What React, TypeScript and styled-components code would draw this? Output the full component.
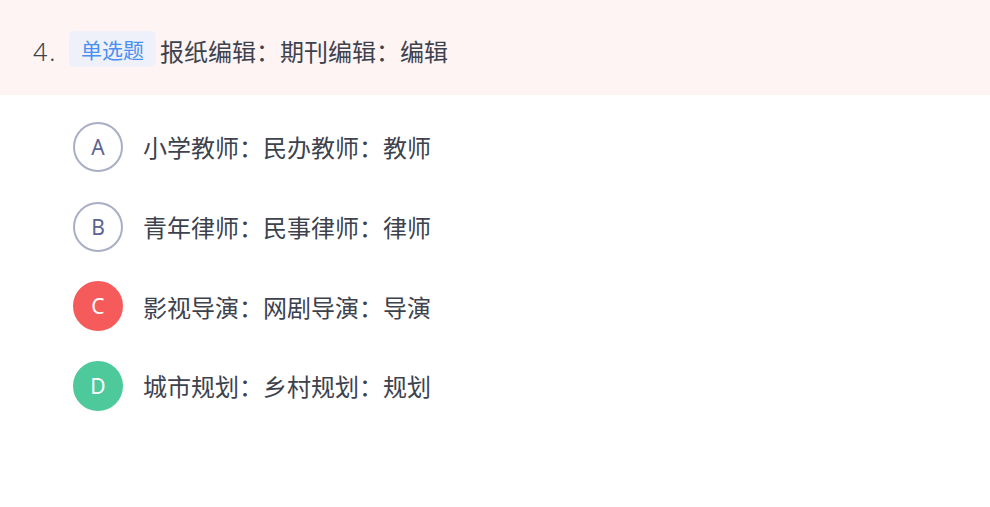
import styled, { createGlobalStyle } from 'styled-components'

const GlobalStyle = createGlobalStyle`
  body {
    margin: 0;
    background: #ffffff;
    font-family: 'Noto Sans CJK SC', 'Noto Sans', sans-serif;
  }
`

type Option = {
  key: string
  text: string
  state: 'idle' | 'wrong' | 'right'
}

const options: Option[] = [
  { key: 'A', text: '小学教师：民办教师：教师', state: 'idle' },
  { key: 'B', text: '青年律师：民事律师：律师', state: 'idle' },
  { key: 'C', text: '影视导演：网剧导演：导演', state: 'wrong' },
  { key: 'D', text: '城市规划：乡村规划：规划', state: 'right' },
]

const App = () => {
  return (
    <>
      <GlobalStyle />
      <Question>
        <Number>4.</Number>
        <Tag>单选题</Tag>
        <Title>报纸编辑：期刊编辑：编辑</Title>
      </Question>
      <OptionList>
        {options.map((o) => (
          <OptionRow key={o.key}>
            <Badge state={o.state}>{o.key}</Badge>
            <OptionText>{o.text}</OptionText>
          </OptionRow>
        ))}
      </OptionList>
    </>
  )
}

const Question = styled.div`
  box-sizing: border-box;
  display: flex;
  align-items: center;
  height: 95px;
  padding: 6px 0 0 33px;
  background-color: #fef4f4;
`

const Number = styled.span`
  font-family: 'Noto Sans', sans-serif;
  font-size: 25px;
  font-weight: 300;
  color: #3d424d;
  letter-spacing: 2px;
  width: 36px;
`

const Tag = styled.span`
  display: inline-flex;
  align-items: center;
  justify-content: center;
  width: 87px;
  height: 36px;
  margin-top: -3px;
  border-radius: 5px;
  background-color: #eef1f9;
  color: #4b8ff3;
  font-size: 21px;
  margin-right: 4px;
`

const Title = styled.span`
  font-size: 24px;
  color: #3d424d;
`

const OptionList = styled.div`
  display: flex;
  flex-direction: column;
  gap: 30px;
  padding: 27px 0 0 73px;
`

const OptionRow = styled.div`
  display: flex;
  align-items: center;
  height: 49.7px;
`

const badgeColors = {
  idle: { bg: '#ffffff', border: '#a9aec4', color: '#5b6390' },
  wrong: { bg: '#f65b5b', border: '#f65b5b', color: '#ffffff' },
  right: { bg: '#4ec99b', border: '#4ec99b', color: '#ffffff' },
}

const Badge = styled.div<{ state: Option['state'] }>`
  box-sizing: border-box;
  width: 50px;
  height: 50px;
  border-radius: 50%;
  display: flex;
  align-items: center;
  justify-content: center;
  font-family: 'Noto Sans', sans-serif;
  font-size: 21px;
  background-color: ${({ state }) => badgeColors[state].bg};
  border: 2px solid ${({ state }) => badgeColors[state].border};
  color: ${({ state }) => badgeColors[state].color};
  margin-right: 20px;
`

const OptionText = styled.span`
  font-size: 24px;
  color: #3d424d;
`

export default App
